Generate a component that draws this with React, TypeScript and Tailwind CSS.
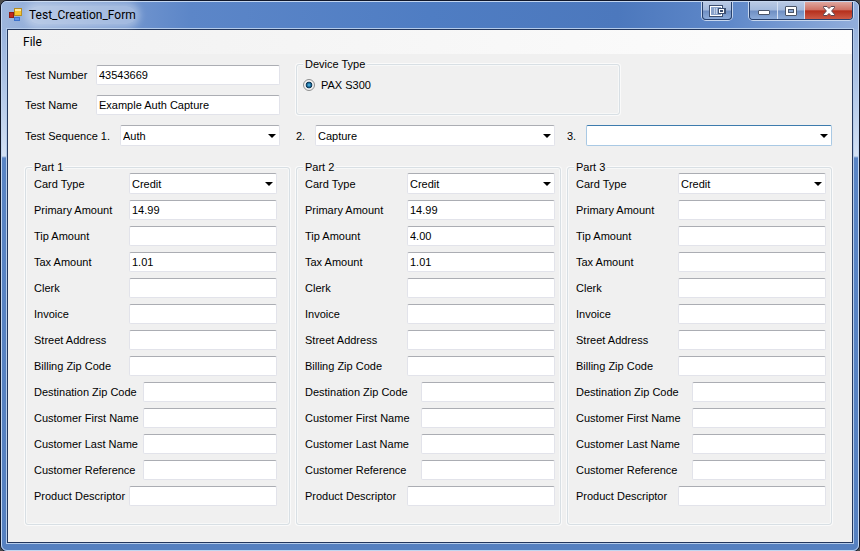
import React, { useId } from 'react'

const box =
  'min-w-0 rounded-[2px] border bg-white px-[2px] text-[11px] leading-[14px] text-black outline-none'
const restingBorder = 'border-[#e2e3ea] border-t-[#abadb3]'
const focusBorder = 'border-[#a9c9e4] border-t-[#3d7bad]'

function TextBox({ id, value }: { id: string; value?: string }) {
  return <input id={id} type="text" defaultValue={value ?? ''} className={`${box} ${restingBorder} h-5 flex-1`} />
}

function ComboBox({ id, options, focused }: { id: string; options: string[]; focused?: boolean }) {
  return (
    <div className="relative flex h-[21px] min-w-0 flex-1">
      <select id={id} className={`${box} w-full appearance-none ${focused ? focusBorder : restingBorder}`}>
        {options.map((o) => (
          <option key={o}>{o}</option>
        ))}
      </select>
      <svg className="pointer-events-none absolute top-[9px] right-1" width="8" height="4" viewBox="0 0 8 4">
        <path d="M0 0h8L4 4z" fill="#000" />
      </svg>
    </div>
  )
}

function GroupBox({ title, className, children }: { title: string; className: string; children: React.ReactNode }) {
  return (
    <fieldset
      className={`min-w-0 rounded-[3px] border border-[#d8dfe4] shadow-[0_0_0_1px_#fafafa,inset_0_0_0_1px_#f7f8f8] ${className}`}
    >
      <legend className="bg-[#f0f0f0] px-[2px] text-[11px] leading-[12px]">{title}</legend>
      {children}
    </fieldset>
  )
}

const rows: { label: string; wide?: boolean }[] = [
  { label: 'Primary Amount' },
  { label: 'Tip Amount' },
  { label: 'Tax Amount' },
  { label: 'Clerk' },
  { label: 'Invoice' },
  { label: 'Street Address' },
  { label: 'Billing Zip Code' },
  { label: 'Destination Zip Code', wide: true },
  { label: 'Customer First Name', wide: true },
  { label: 'Customer Last Name', wide: true },
  { label: 'Customer Reference', wide: true },
  { label: 'Product Descriptor' },
]

function Part({ title, values, first }: { title: string; values: Record<string, string>; first?: boolean }) {
  const id = useId()
  const narrowLabel = first ? 'w-[95px]' : 'w-[102px]'
  const wideLabel = first ? 'w-[109px]' : 'w-[116px]'
  return (
    <GroupBox title={title} className={`pb-[18px] pl-[6px] ${first ? 'pr-3' : 'pr-[5px]'}`}>
      <div className="flex flex-col gap-[6px] pl-[2px]">
        <div className="flex items-center">
          <label htmlFor={`${id}-card`} className={`shrink-0 ${narrowLabel}`}>
            Card Type
          </label>
          <ComboBox id={`${id}-card`} options={['Credit']} />
        </div>
        {rows.map(({ label, wide }) => (
          <div key={label} className="flex items-center">
            <label htmlFor={`${id}-${label}`} className={`shrink-0 whitespace-nowrap ${wide ? wideLabel : narrowLabel}`}>
              {label}
            </label>
            <TextBox id={`${id}-${label}`} value={values[label]} />
          </div>
        ))}
      </div>
    </GroupBox>
  )
}

const glass =
  'flex items-center justify-center bg-[linear-gradient(to_bottom,#b9c9e4_0%,#a3b9dc_48%,#6f8fc3_52%,#8cabd9_100%)]'

function TitleBar() {
  return (
    <header className="flex h-[27px] items-start justify-between rounded-t-[5px] bg-[linear-gradient(to_right,#9db6dd_0%,#7f9fd3_10%,#5c86c8_22%,#4f7dc3_50%,#4c78bd_72%,#5f88c9_85%,#92aedb_100%)]">
      <div className="flex items-center gap-[6px] pt-1 pl-[7px]">
        <svg width="14" height="14" viewBox="0 0 14 14">
          <rect x="5.5" y="0.5" width="7" height="7" fill="#f7c52f" stroke="#b58a1c" />
          <path d="M6 1h6v2H6z" fill="#fde79a" />
          <rect x="0.5" y="4.5" width="4" height="5" fill="#c3281d" stroke="#8e1d16" />
          <rect x="5.5" y="9.5" width="5" height="3" fill="#5f93e6" stroke="#3d72cc" />
        </svg>
        <h1 className="rounded-full bg-white/35 font-[Roboto,'Noto_Sans',sans-serif] text-[12px] leading-[18px] text-black shadow-[0_0_7px_4px_rgba(255,255,255,0.35)]">
          Test_Creation_Form
        </h1>
      </div>
      <div className="flex items-start pr-[5px]">
        <button
          type="button"
          aria-label="Move window"
          className={`${glass} mr-[17px] h-[18px] w-[30px] rounded-b-[4px] border border-t-0 border-[#27406d] shadow-[0_0_0_1px_#c6d6ee]`}
        >
          <svg width="17" height="12" viewBox="0 0 17 12" fill="none">
            <rect x="0.5" y="0.5" width="13" height="11" fill="#8aa3cb" stroke="#3d4f70" />
            <rect x="1.5" y="1.5" width="11" height="9" stroke="#fff" />
            <path d="M5.500 3v6M7.500 3v6" stroke="#c3d0e6" />
            <rect x="9" y="3" width="8" height="6" fill="#3d4f70" />
            <rect x="10.500" y="4.500" width="4" height="3" stroke="#fff" />
          </svg>
        </button>
        <div className="flex h-[18px] overflow-hidden rounded-b-[4px] border border-t-0 border-[#27406d] shadow-[0_0_0_1px_#c6d6ee]">
          <button type="button" aria-label="Minimize" className={`${glass} w-7 border-r border-[#d5e0f2] pt-1`}>
            <svg width="12" height="6" viewBox="0 0 12 6">
              <rect x="0.500" y="0.500" width="11" height="4" rx="0.500" fill="#fff" stroke="#4a5468" />
            </svg>
          </button>
          <button type="button" aria-label="Maximize" className={`${glass} w-[27px] border-r border-[#d5e0f2]`}>
            <svg width="12" height="10" viewBox="0 0 12 10">
              <rect x="0.500" y="0.500" width="11" height="9" rx="0.500" fill="#fff" stroke="#4a5468" />
              <rect x="3.500" y="3.500" width="5" height="3" fill="#8aa7d3" stroke="#4a5468" />
            </svg>
          </button>
          <button
            type="button"
            aria-label="Close"
            className="flex w-[47px] items-center justify-center bg-[linear-gradient(to_bottom,#dfa79f_0%,#cf7265_46%,#b52f1c_52%,#cc5a47_100%)]"
          >
            <svg width="12" height="10" viewBox="0 0 12 10">
              <path
                d="M.5.5h3.500L6 2.500 8 .5h3.500v1.200L8.600 5l2.900 3.300v1.200H8L6 7.500 4 9.500H.5V8.300L3.400 5 .5 1.700z"
                fill="#fff"
                stroke="#5b4650"
              />
            </svg>
          </button>
        </div>
      </div>
    </header>
  )
}

export default function App() {
  return (
    <div className="bg-[#4a4a4a]">
      <div className="min-w-[700px] rounded-[7px] border border-[#10172a] bg-[linear-gradient(to_bottom,#8eabd9_0px,#a9c0e4_70px,#d3e1f4_155px,#5a85c5_157px,#5580c0_100%)] font-['Liberation_Sans',Arial,sans-serif]">
        <div className="rounded-[6px] border border-[#c3d6f0] px-[5px] pb-[7px]">
          <div className="-mx-[5px]">
            <TitleBar />
          </div>
          <div className="border border-[#22365c] bg-[#f0f0f0] shadow-[0_0_0_1px_#b4cbea]">
            <nav className="flex h-6 items-center bg-linear-to-r from-[#f1f1f1] to-[#fdfdfd] pl-[15px]">
              <button type="button" className="font-[Roboto,'Noto_Sans',sans-serif] text-[12px] leading-[18px] text-black">
                File
              </button>
            </nav>
            <main className="pt-1 pr-5 pb-[17px] pl-[17px] text-[11px] leading-[14px] text-black">
              <div className="grid grid-cols-3 gap-x-[6px]">
                <div className="flex flex-col gap-[10px] pt-[7px] pr-[10px]">
                  <div className="flex items-center">
                    <label htmlFor="number" className="w-[71px] shrink-0 whitespace-nowrap">
                      Test Number
                    </label>
                    <TextBox id="number" value="43543669" />
                  </div>
                  <div className="flex items-center">
                    <label htmlFor="name" className="w-[71px] shrink-0 whitespace-nowrap">
                      Test Name
                    </label>
                    <TextBox id="name" value="Example Auth Capture" />
                  </div>
                </div>
                <GroupBox title="Device Type" className="col-span-2 w-[324px] pl-[6px]">
                  <label className="flex h-[30px] items-center gap-[6px]">
                    <input
                      type="radio"
                      name="device"
                      defaultChecked
                      className="size-3 appearance-none rounded-full border border-[#8e8f8f] bg-[radial-gradient(circle,#5fc4ee_0,#1d6f9f_25%,#0f3350_42%,#f0f0f0_52%)]"
                    />
                    PAX S300
                  </label>
                </GroupBox>
              </div>
              <div className="mt-[10px] grid grid-cols-3 gap-x-[6px]">
                <div className="flex items-center pr-[10px]">
                  <label htmlFor="seq1" className="w-[95px] shrink-0 whitespace-nowrap">
                    Test Sequence 1.
                  </label>
                  <ComboBox id="seq1" options={['Auth']} />
                </div>
                <div className="flex items-center pr-[6px]">
                  <label htmlFor="seq2" className="w-[19px] shrink-0">
                    2.
                  </label>
                  <ComboBox id="seq2" options={['Capture']} />
                </div>
                <div className="flex items-center">
                  <label htmlFor="seq3" className="w-[19px] shrink-0">
                    3.
                  </label>
                  <ComboBox id="seq3" options={['']} focused />
                </div>
              </div>
              <div className="mt-[15px] grid grid-cols-3 gap-x-[6px]">
                <Part
                  title="Part 1"
                  first
                  values={{ 'Primary Amount': '14.99', 'Tax Amount': '1.01' }}
                />
                <Part
                  title="Part 2"
                  values={{ 'Primary Amount': '14.99', 'Tip Amount': '4.00', 'Tax Amount': '1.01' }}
                />
                <Part title="Part 3" values={{}} />
              </div>
            </main>
          </div>
        </div>
      </div>
    </div>
  )
}
